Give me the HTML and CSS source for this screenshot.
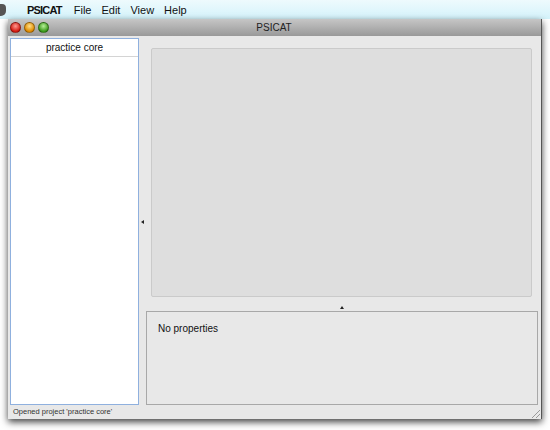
FILE: index.html
```html
<!DOCTYPE html>
<html lang="en">
<head>
    <meta charset="UTF-8">
    <title>PSICAT</title>
    <link rel="stylesheet" href="styles.css">
</head>
<body>
    <div class="menubar">
        <span class="apple"></span>
        <span class="menu-item app-name">PSICAT</span>
        <span class="menu-item">File</span>
        <span class="menu-item">Edit</span>
        <span class="menu-item">View</span>
        <span class="menu-item">Help</span>
    </div>

    <div class="window">
        <div class="titlebar">
            <div class="lights">
                <span class="light red"></span>
                <span class="light yellow"></span>
                <span class="light green"></span>
            </div>
            <div class="title">PSICAT</div>
        </div>

        <div class="content">
            <div class="main">
                <!-- project list -->
                <div class="sidebar">
                    <div class="sidebar-header">practice core</div>
                </div>

                <div class="vsplit">
                    <svg width="4" height="4" viewBox="0 0 4 4"><path d="M0 2 L3 0 L3 4 Z" fill="#222"/></svg>
                </div>

                <div class="right">
                    <div class="canvas-wrap">
                        <div class="canvas"></div>
                    </div>
                    <div class="hsplit">
                        <svg width="4" height="3" viewBox="0 0 4 3"><path d="M0 3 L2 0 L4 3 Z" fill="#222"/></svg>
                    </div>
                    <div class="properties">No properties</div>
                </div>
            </div>

            <div class="statusbar">Opened project 'practice core'</div>
            <span class="grip"></span>
        </div>
    </div>
</body>
</html>
```

FILE: styles.css
```css
/* PSICAT main window */
body {
    margin: 0;
    padding: 0;
    width: 550px;
    height: 430px;
    background-color: #fff;
    font-family: "Liberation Sans", Arial, sans-serif;
    overflow: hidden;
}

.menubar {
    height: 19px;
    display: flex;
    align-items: center;
    background: linear-gradient(#eefafd, #d4f3fb);
    font-size: 11px;
    color: #111;
}

.apple {
    display: block;
    width: 6px;
    height: 12px;
    background-color: #555;
    border-radius: 0 4px 5px 0;
    margin-right: 21px;
}

.menu-item {
    margin-right: 10px;
}

.app-name {
    font-weight: bold;
    letter-spacing: -0.8px;
    margin-right: 12px;
}

.window {
    margin-left: 8px;
    width: 534px;
    box-shadow: 0 3px 7px rgba(0, 0, 0, 0.75);
}

.titlebar {
    height: 17px;
    display: flex;
    align-items: center;
    background: linear-gradient(#c6c6c6, #999);
    border-right: 1px solid #555;
}

.lights {
    display: flex;
    gap: 3px;
    margin-left: 2px;
}

.light {
    width: 9px;
    height: 9px;
    border-radius: 50%;
    border: 1px solid rgba(0, 0, 0, 0.35);
}

.red {
    background: radial-gradient(circle at 50% 35%, #ff9a90, #d41a10 70%);
}

.yellow {
    background: radial-gradient(circle at 50% 35%, #ffe08a, #e08a00 70%);
}

.green {
    background: radial-gradient(circle at 50% 35%, #b8f09a, #3a9a1a 70%);
}

.title {
    flex: 1;
    text-align: center;
    font-size: 10px;
    color: #222;
    margin-right: 42px;
}

.content {
    background-color: #e8e8e8;
    border-right: 1px solid #555;
    padding: 2px 3px 0 2px;
    position: relative;
}

.main {
    display: flex;
    height: 367px;
}

.sidebar {
    width: 127px;
    background-color: #fff;
    border: 1px solid #8fb0de;
}

.sidebar-header {
    height: 17px;
    line-height: 17px;
    text-align: center;
    font-size: 10px;
    color: #111;
    border-bottom: 1px solid #d4d4d4;
}

.vsplit {
    width: 7px;
    display: flex;
    align-items: center;
    justify-content: center;
}

.right {
    width: 392px;
    display: flex;
    flex-direction: column;
}

.canvas-wrap {
    padding: 10px 6px 0 5px;
}

.canvas {
    height: 247px;
    background-color: #dedede;
    border: 1px solid #cacaca;
    border-radius: 2px;
}

.hsplit {
    height: 14px;
    display: flex;
    align-items: flex-end;
    justify-content: center;
}

.hsplit svg {
    margin-bottom: 2px;
}

.properties {
    flex: 1;
    background-color: #e8e8e8;
    border: 1px solid #a8a8a8;
    font-size: 10px;
    color: #111;
    padding: 11px 11px;
}

.statusbar {
    height: 14px;
    line-height: 14px;
    font-size: 7.5px;
    color: #333;
    padding-left: 3px;
}

.grip {
    position: absolute;
    right: 1px;
    bottom: 1px;
    width: 10px;
    height: 10px;
    background: repeating-linear-gradient(135deg, transparent 0 2px, #999 2px 3px);
    clip-path: polygon(100% 0, 100% 100%, 0 100%);
}
```
